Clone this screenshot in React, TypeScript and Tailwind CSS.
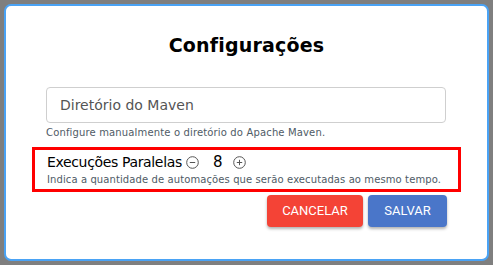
import { useState } from "react";

function MinusCircle() {
  return (
    <svg width="13" height="13" viewBox="0 0 13 13" fill="none" stroke="#555" strokeWidth="1">
      <circle cx="6.5" cy="6.5" r="5.8" />
      <line x1="3.8" y1="6.5" x2="9.2" y2="6.5" />
    </svg>
  );
}

function PlusCircle() {
  return (
    <svg width="13" height="13" viewBox="0 0 13 13" fill="none" stroke="#555" strokeWidth="1">
      <circle cx="6.5" cy="6.5" r="5.8" />
      <line x1="3.8" y1="6.5" x2="9.2" y2="6.5" />
      <line x1="6.5" y1="3.8" x2="6.5" y2="9.2" />
    </svg>
  );
}

export default function App() {
  const [count, setCount] = useState(8);
  const [dir, setDir] = useState("");

  return (
    <div className="w-[493px] h-[265px] bg-[#7f7f7f] p-[4px] font-['DejaVu_Sans',Verdana,sans-serif]">
      <div className="w-full h-full bg-white border-2 border-[#4aa3f5] rounded-[7px] flex flex-col">
        <h1 className="text-center text-[19px] font-bold text-black tracking-[0.2px] mt-[27px] leading-[24px]">
          Configurações
        </h1>

        <div className="mt-[30px] pl-[40px] pr-[41px]">
          <input
            value={dir}
            onChange={(e) => setDir(e.target.value)}
            placeholder="Diretório do Maven"
            className="w-full h-[36px] border border-[#cfcfcf] rounded-[4px] px-[13px] text-[14px] text-[#333] placeholder:text-[#555] outline-none"
          />
          <p className="text-[10px] text-[#4f5b66] mt-[3px] leading-[14px] tracking-[0.15px]">
            Configure manualmente o diretório do Apache Maven.
          </p>
        </div>

        <div className="mt-[7px] mx-[26px] border-[3px] border-[#ff0000] px-[12px] pt-[2px] pb-[3px]">
          <div className="flex items-center h-[21px] text-[14px] text-black">
            <span className="tracking-[-0.35px]">Execuções Paralelas</span>
            <button
              type="button"
              onClick={() => setCount((c) => Math.max(1, c - 1))}
              className="ml-[4px] flex items-center"
              aria-label="Diminuir"
            >
              <MinusCircle />
            </button>
            <span className="ml-[14px] w-[10px] text-center text-[15px]">{count}</span>
            <button
              type="button"
              onClick={() => setCount((c) => c + 1)}
              className="ml-[10px] flex items-center"
              aria-label="Aumentar"
            >
              <PlusCircle />
            </button>
          </div>
          <p className="text-[10px] text-[#4f5b66] leading-[13px] tracking-[0.1px]">
            Indica a quantidade de automações que serão executadas ao mesmo tempo.
          </p>
        </div>

        <div className="flex justify-end gap-[5px] pr-[40px] mt-[3px]">
          <button
            type="button"
            className="w-[96px] h-[32px] rounded-[4px] bg-[#f44336] text-white text-[13px] font-['Roboto',sans-serif] font-normal shadow-[0_2px_3px_rgba(0,0,0,0.3)]"
          >
            CANCELAR
          </button>
          <button
            type="button"
            className="w-[79px] h-[32px] rounded-[4px] bg-[#4a76c9] text-white text-[13px] font-['Roboto',sans-serif] font-normal shadow-[0_2px_3px_rgba(0,0,0,0.3)]"
          >
            SALVAR
          </button>
        </div>
      </div>
    </div>
  );
}
